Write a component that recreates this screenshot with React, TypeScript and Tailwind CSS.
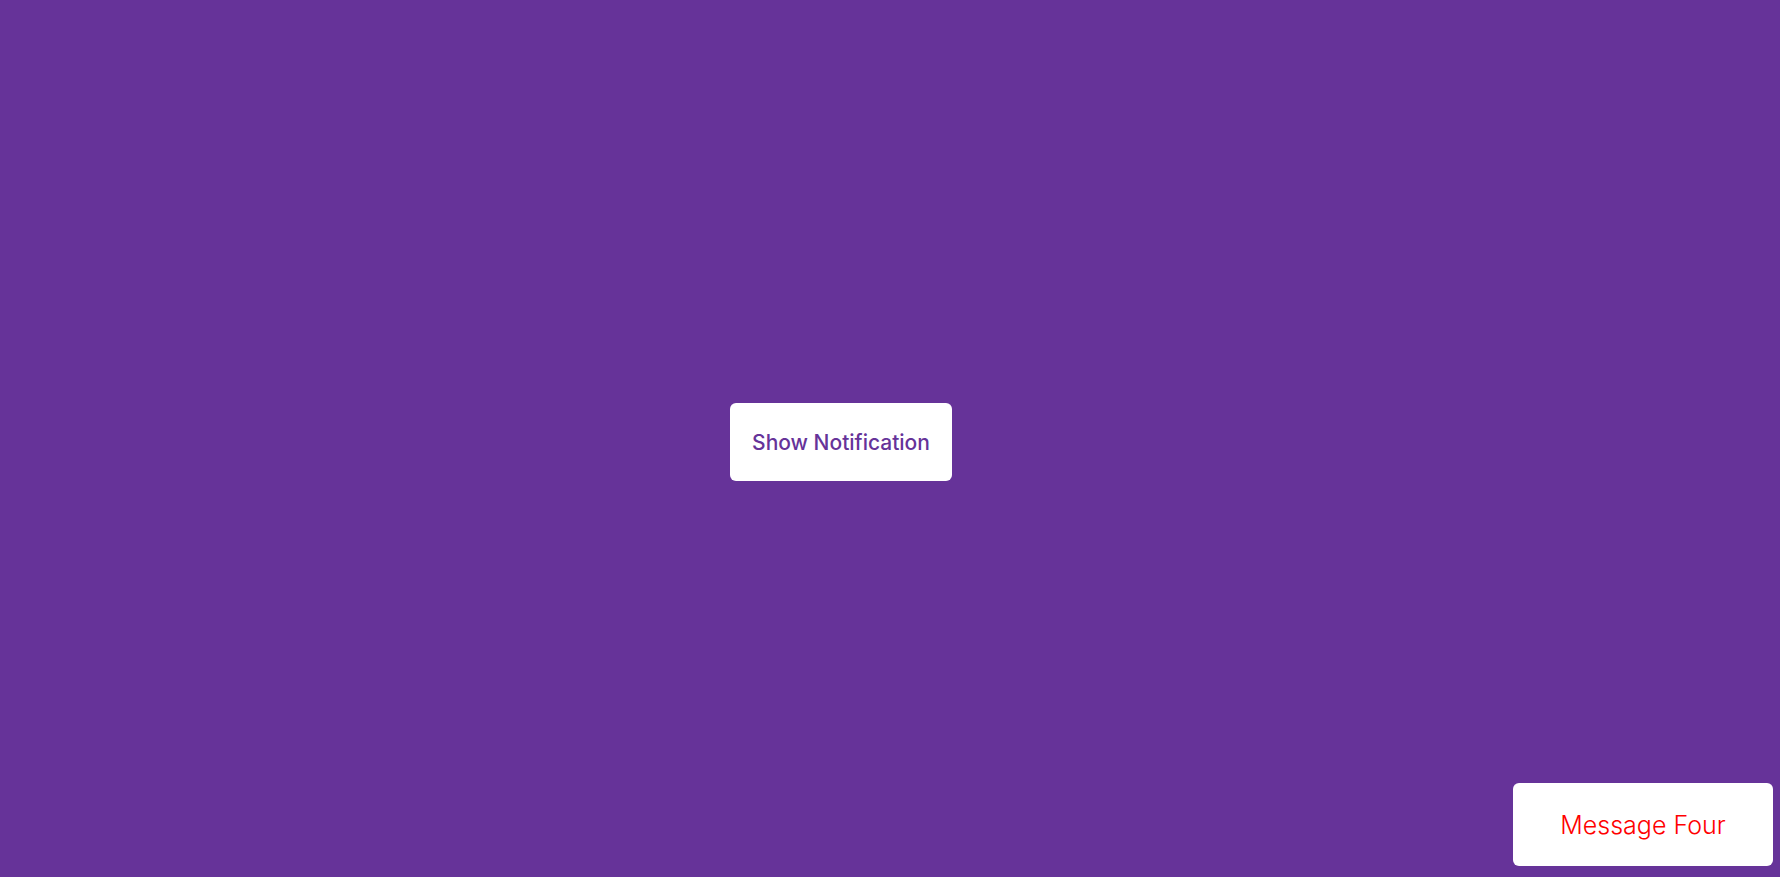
import React from 'react'

export default function App() {
  return (
    <main className="min-h-screen w-full bg-[#663399] flex items-center justify-center pr-[98px] pt-[7px]" style={{ fontFamily: 'Inter, "Noto Sans", sans-serif' }}>
      {/* Trigger */}
      <button className="w-[222px] h-[78px] rounded-[6px] bg-white text-[#663399] text-[21px] font-medium pt-[2px]">
        Show Notification
      </button>

      {/* Toast */}
      <div className="fixed right-[7px] bottom-[11px] flex flex-col gap-2">
        <div className="w-[260px] h-[83px] rounded-[6px] bg-white flex items-center justify-center text-[25px] font-light text-[#ff0000] pt-[2px]">
          Message Four
        </div>
      </div>
    </main>
  )
}
